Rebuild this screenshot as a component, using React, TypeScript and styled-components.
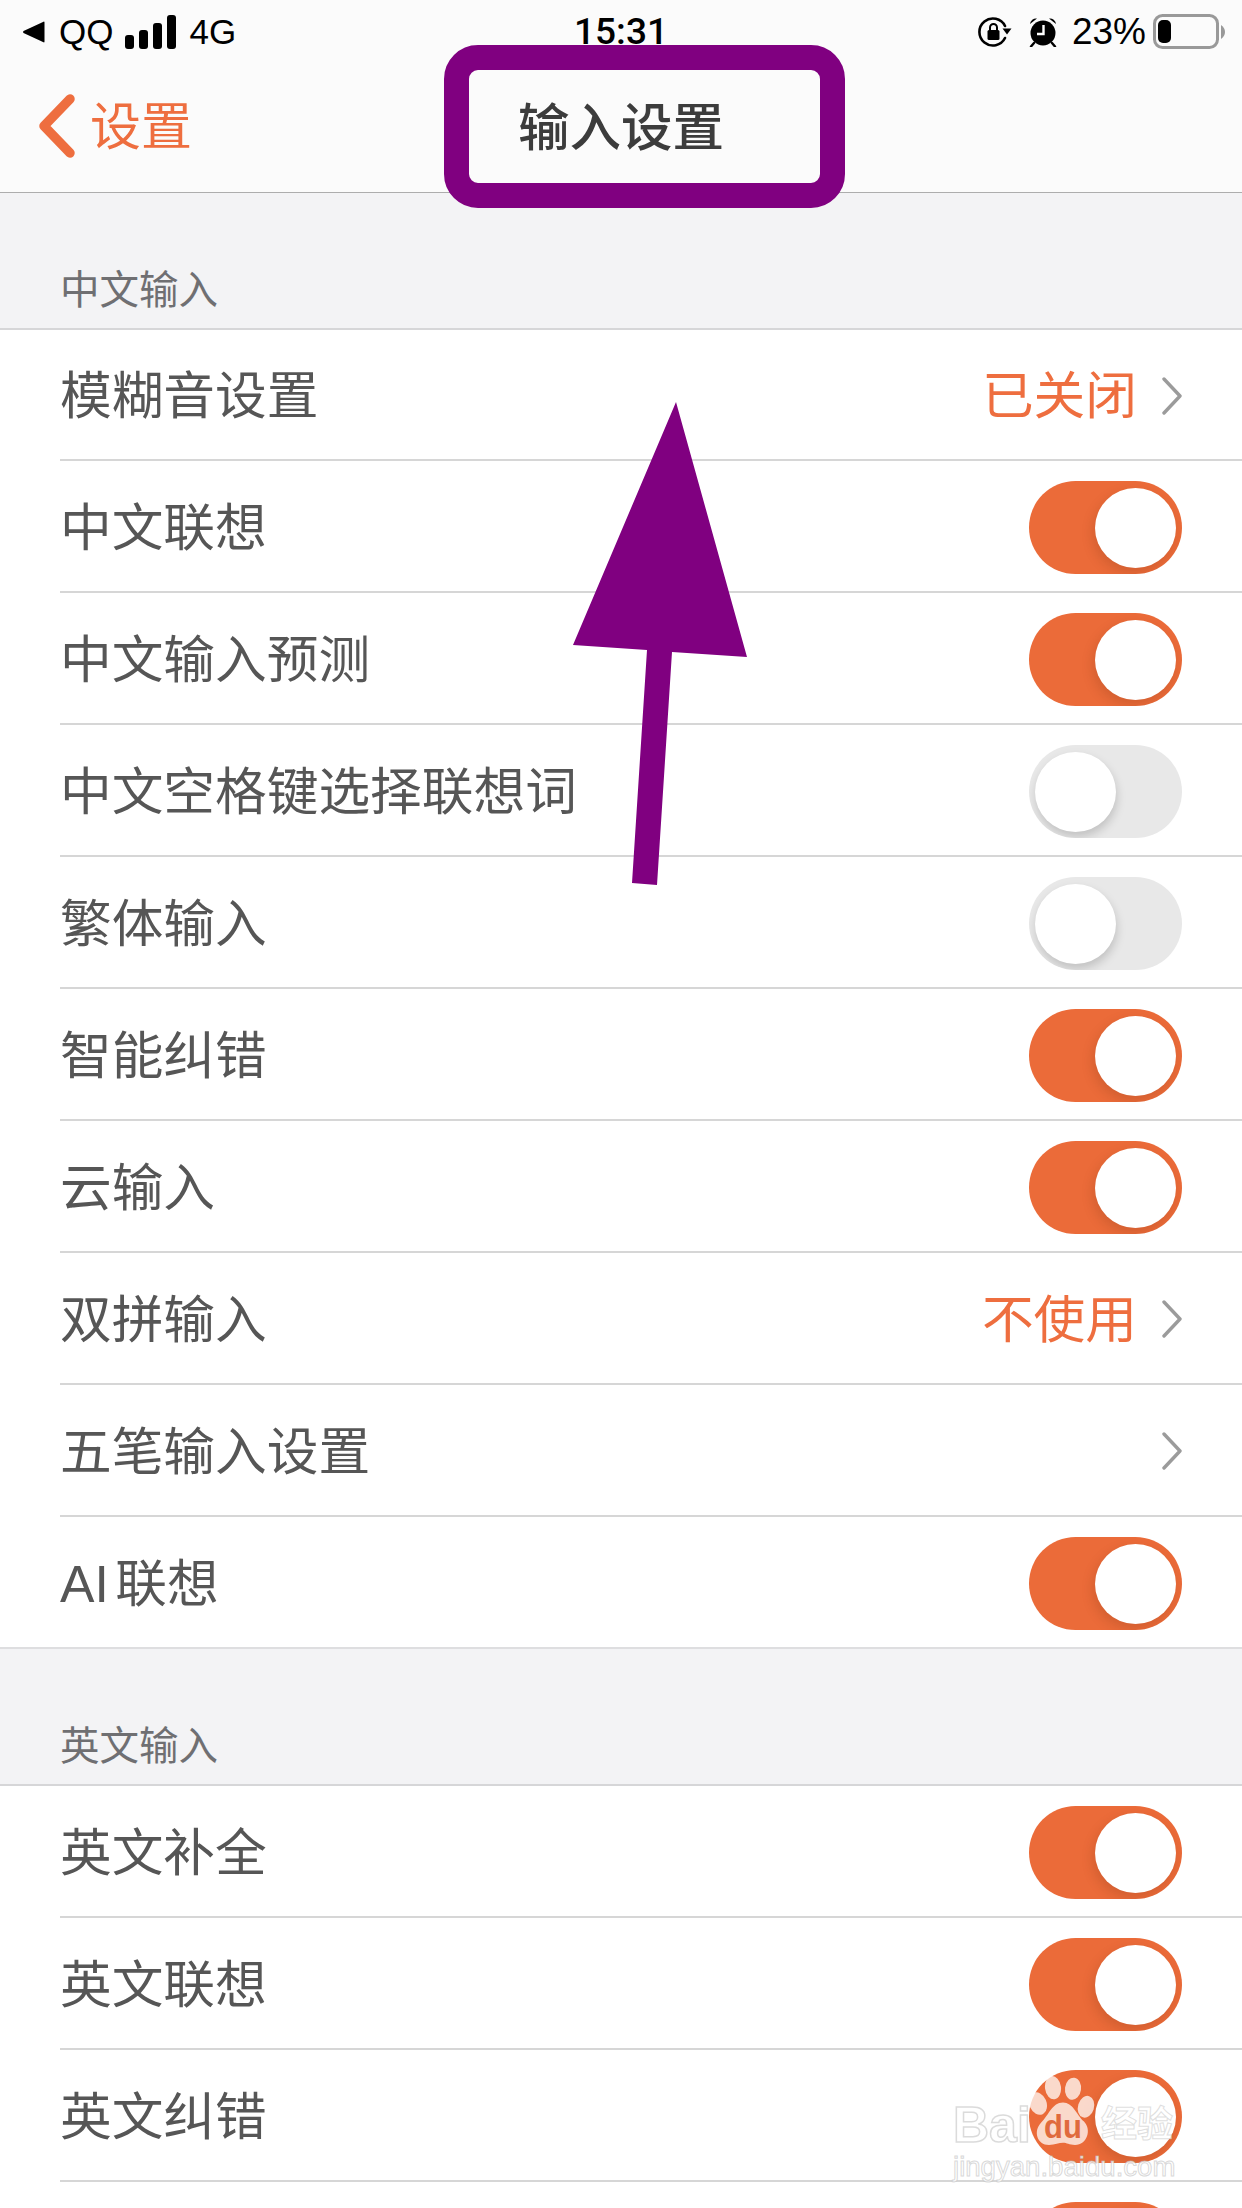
import React from "react";
import styled, { createGlobalStyle } from "styled-components";

const CJK = `"Liberation Sans", "Noto Sans CJK SC", sans-serif`;
const ORANGE = "#ee6e3f";

const Global = createGlobalStyle`
  html, body { margin: 0; padding: 0; background: #f3f3f5; overflow: hidden; }
  * { box-sizing: border-box; }
`;

const Page = styled.div`
  position: relative;
  width: 1242px;
  height: 2208px;
  overflow: hidden;
  background: #f3f3f5;
  font-family: ${CJK};
`;

const Header = styled.header`
  height: 193px;
  background: #fbfbfb;
  border-bottom: 1px solid #adadad;
  display: flex;
  flex-direction: column;
`;

const StatusBar = styled.div`
  height: 60px;
  display: grid;
  grid-template-columns: 1fr auto 1fr;
  align-items: center;
  padding: 3px 16px 0 16px;
  color: #000;
  font-size: 36px;
`;

const StatusLeft = styled.div`
  display: flex;
  align-items: center;
  padding-left: 6px;
`;

const StatusRight = styled.div`
  display: flex;
  align-items: center;
  justify-content: flex-end;
`;

const Carrier = styled.span`
  margin: 0 12px 0 13px;
  font-size: 35px;
  line-height: 40px;
`;

const NetType = styled.span`
  margin-left: 12px;
  font-size: 35px;
  line-height: 40px;
`;

const Clock = styled.span`
  font-family: Roboto, sans-serif;
  font-weight: 500;
  font-size: 37px;
  line-height: 40px;
`;

const Percent = styled.span`
  margin: 0 7px 0 15px;
  font-size: 37px;
  line-height: 40px;
`;

const LockIcon = styled.svg`
  margin-right: 2px;
`;

const AlarmIcon = styled.svg`
  margin-left: 15px;
`;

const NavBar = styled.nav`
  flex: 1;
  display: grid;
  grid-template-columns: 1fr auto 1fr;
  align-items: center;
  padding: 0 38px;
`;

const BackLink = styled.div`
  display: flex;
  align-items: center;
  gap: 14px;
  color: ${ORANGE};
  font-size: 51px;
`;

const BackText = styled.span`
  padding-bottom: 6px;
`;

const Title = styled.h1`
  margin: 0;
  padding-bottom: 6px;
  font-size: 51.5px;
  font-weight: 500;
  color: #3c3c3c;
`;

const SectionHead = styled.div`
  height: 137px;
  display: flex;
  align-items: flex-end;
  padding: 0 0 10px 60px;
  font-size: 39.5px;
  line-height: 56px;
  color: #6f6f72;
  border-bottom: 2px solid #d6d6d8;
`;

const Row = styled.div<{ $compact?: boolean; $last?: boolean }>`
  height: ${(p) => (p.$compact ? 131 : 132)}px;
  background: #fff;
  padding-top: 2px;
  padding-left: ${(p) => (p.$last ? 60 : 0)}px;
  margin-left: ${(p) => (p.$last ? 0 : 60)}px;
  padding-right: 60px;
  display: flex;
  align-items: center;
  justify-content: space-between;
  border-bottom: 2px solid ${(p) => (p.$last ? "#dedee0" : "#d6d6d6")};
`;

const RowWrap = styled.div`
  background: #fff;
`;

const Label = styled.span`
  font-size: 51.7px;
  color: #565656;
  padding-bottom: 8px;
  text-autospace: normal;
`;

const Trailing = styled.div`
  display: flex;
  align-items: center;
  gap: 25px;
`;

const Value = styled.span`
  font-size: 51.7px;
  color: ${ORANGE};
  padding-bottom: 8px;
`;

const Track = styled.div<{ $on: boolean }>`
  position: relative;
  width: 153px;
  height: 93px;
  border-radius: 47px;
  overflow: hidden;
  background: ${(p) => (p.$on ? "#eb6b39" : "#e8e8e8")};
`;

const Knob = styled.div<{ $on: boolean }>`
  position: absolute;
  top: 7px;
  left: ${(p) => (p.$on ? 66 : 6)}px;
  width: 81px;
  height: 80px;
  border-radius: 50%;
  background: #fff;
  box-shadow: ${(p) =>
    p.$on
      ? "-2px 5px 12px rgba(120, 50, 20, 0.22)"
      : "1px 5px 10px rgba(0, 0, 0, 0.17)"};
`;

const PurpleFrame = styled.div`
  position: absolute;
  left: 444px;
  top: 45px;
  width: 401px;
  height: 163px;
  border: 25px solid #800080;
  border-radius: 34px;
`;

const ArrowMark = styled.svg`
  position: absolute;
  left: 0;
  top: 0;
`;

const Watermark = styled.div`
  position: absolute;
  left: 953px;
  top: 2096px;
  width: 224px;
  color: rgba(255, 255, 255, 0.82);
`;

const MarkTop = styled.div`
  display: flex;
  align-items: flex-start;
  height: 54px;
`;

const MarkBai = styled.span`
  font-family: "Liberation Sans", sans-serif;
  font-weight: 700;
  font-size: 50px;
  line-height: 58px;
  width: 76px;
  -webkit-text-stroke: 1.5px rgba(190, 190, 190, 0.55);
`;

const MarkPaw = styled.svg`
  flex: none;
  margin-top: -20px;
`;

const MarkCn = styled.span`
  font-size: 36px;
  font-weight: 700;
  line-height: 58px;
  white-space: nowrap;
  margin-left: 4px;
  -webkit-text-stroke: 1px rgba(190, 190, 190, 0.5);
`;

const MarkUrl = styled.div`
  font-family: "Liberation Sans", sans-serif;
  font-size: 27.6px;
  line-height: 34px;
  white-space: nowrap;
  -webkit-text-stroke: 1px rgba(190, 190, 190, 0.6);
`;

const Chevron = () => (
  <svg width="20" height="38" viewBox="0 0 20 38">
    <polyline points="2,2 18,19 2,36" fill="none" stroke="#9b9b9b" strokeWidth="3.4" strokeLinecap="round" strokeLinejoin="round" />
  </svg>
);

const Toggle = ({ on }: { on: boolean }) => (
  <Track $on={on}>
    <Knob $on={on} />
  </Track>
);

type Item = { label?: string; on?: boolean; value?: string; link?: boolean };

const chinese: Item[] = [
  { label: "模糊音设置", value: "已关闭", link: true },
  { label: "中文联想", on: true },
  { label: "中文输入预测", on: true },
  { label: "中文空格键选择联想词", on: false },
  { label: "繁体输入", on: false },
  { label: "智能纠错", on: true },
  { label: "云输入", on: true },
  { label: "双拼输入", value: "不使用", link: true },
  { label: "五笔输入设置", link: true },
  { label: "AI联想", on: true },
];

const english: Item[] = [
  { label: "英文补全", on: true },
  { label: "英文联想", on: true },
  { label: "英文纠错", on: true },
  { on: true },
];

const SettingRow = ({ item, compact, last }: { item: Item; compact?: boolean; last?: boolean }) => (
  <RowWrap>
    <Row $compact={compact} $last={last}>
      <Label>{item.label}</Label>
      {item.link ? (
        <Trailing>
          {item.value && <Value>{item.value}</Value>}
          <Chevron />
        </Trailing>
      ) : (
        <Toggle on={!!item.on} />
      )}
    </Row>
  </RowWrap>
);

export default function App() {
  return (
    <Page>
      <Global />
      <Header>
        <StatusBar>
          <StatusLeft>
            <svg width="24" height="22" viewBox="0 0 23 22">
              <path d="M22 1.5 L22 20.5 Q22 22 20.5 21 L1 12 Q0 11 1 10 L20.5 1 Q22 0 22 1.5 Z" fill="#000" />
            </svg>
            <Carrier>QQ</Carrier>
            <svg width="52" height="34" viewBox="0 0 52 34">
              <rect x="0" y="20" width="9" height="14" rx="3" fill="#000" />
              <rect x="14" y="15" width="9" height="19" rx="3" fill="#000" />
              <rect x="28" y="8" width="9" height="26" rx="3" fill="#000" />
              <rect x="42" y="0" width="9" height="34" rx="3" fill="#000" />
            </svg>
            <NetType>4G</NetType>
          </StatusLeft>
          <Clock>15:31</Clock>
          <StatusRight>
            <LockIcon width="34" height="30" viewBox="0 0 34 30">
              <path d="M27 21 A13.5 13.5 0 1 1 27 9" fill="none" stroke="#000" strokeWidth="2.6" strokeLinecap="round" />
              <path d="M24.5 11.5 L33.5 11.5 L29 17.5 Z" fill="#000" />
              <rect x="9.5" y="13" width="12" height="10" rx="1.5" fill="#000" />
              <path d="M12 13 V10.5 a3.5 3.5 0 0 1 7 0 V13" fill="none" stroke="#000" strokeWidth="2" />
            </LockIcon>
            <AlarmIcon width="28" height="30" viewBox="0 0 28 30">
              <circle cx="14" cy="16" r="12.5" fill="#000" />
              <path d="M1 7 A6 6 0 0 1 8 1.5 Z M27 7 A6 6 0 0 0 20 1.5 Z" fill="#000" />
              <path d="M5 26 L2 29.5 M23 26 L26 29.5" stroke="#000" strokeWidth="2.4" strokeLinecap="round" />
              <path d="M14.5 8 V17 H8" fill="none" stroke="#fff" strokeWidth="2.4" />
            </AlarmIcon>
            <Percent>23%</Percent>
            <svg width="73" height="36" viewBox="0 0 73 36">
              <rect x="1.5" y="1.5" width="63" height="32" rx="8" fill="none" stroke="#999" strokeWidth="3" />
              <rect x="5" y="6" width="13" height="23" rx="5" fill="#000" />
              <path d="M68 11 Q72 14 72 18 Q72 22 68 25 Z" fill="#999" />
            </svg>
          </StatusRight>
        </StatusBar>
        <NavBar>
          <BackLink>
            <svg width="38" height="64" viewBox="0 0 38 64">
              <polyline points="32,5 6,32 32,59" fill="none" stroke={ORANGE} strokeWidth="9.5" strokeLinecap="round" strokeLinejoin="round" />
            </svg>
            <BackText>设置</BackText>
          </BackLink>
          <Title>输入设置</Title>
          <span />
        </NavBar>
      </Header>

      <SectionHead>中文输入</SectionHead>
      {chinese.map((item, i) => (
        <SettingRow key={i} item={item} compact={i === 0} last={i === chinese.length - 1} />
      ))}

      <SectionHead>英文输入</SectionHead>
      {english.map((item, i) => (
        <SettingRow key={i} item={item} />
      ))}

      <PurpleFrame />
      <ArrowMark width="1242" height="2208" viewBox="0 0 1242 2208">
        <polygon points="676,402 747,657 672,652 657,885 632,883 647,650 573,645" fill="#800080" />
      </ArrowMark>

      <Watermark>
        <MarkTop>
          <MarkBai>Bai</MarkBai>
          <MarkPaw width="68" height="70" viewBox="0 0 68 66" preserveAspectRatio="none">
            <g fill="#ffffff" fillOpacity="0.74">
              <ellipse cx="9" cy="26" rx="8.5" ry="11" transform="rotate(-25 9 26)" />
              <ellipse cx="24" cy="11" rx="8" ry="11" transform="rotate(-8 24 11)" />
              <ellipse cx="44" cy="12" rx="8" ry="10.5" transform="rotate(8 44 12)" />
              <ellipse cx="57" cy="29" rx="8" ry="10.5" transform="rotate(18 57 29)" />
              <path d="M34 25 C44 25 47 36 55 43 C63 51 58 65 46 65 C40 65 38 63 34 63 C30 63 26 65 20 65 C8 65 4 52 12 44 C20 37 23 25 34 25 Z" />
            </g>
            <text x="34" y="58" textAnchor="middle" fontFamily="Liberation Sans, sans-serif" fontWeight="700" fontSize="31" fill="#e06a3d">du</text>
          </MarkPaw>
          <MarkCn>经验</MarkCn>
        </MarkTop>
        <MarkUrl>jingyan.baidu.com</MarkUrl>
      </Watermark>
    </Page>
  );
}
